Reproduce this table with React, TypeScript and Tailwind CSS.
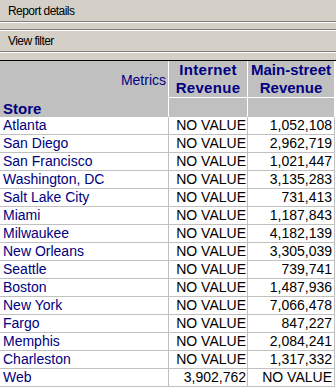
import React from "react";

const rows: [string, string, string][] = [
  ["Atlanta", "NO VALUE", "1,052,108"],
  ["San Diego", "NO VALUE", "2,962,719"],
  ["San Francisco", "NO VALUE", "1,021,447"],
  ["Washington, DC", "NO VALUE", "3,135,283"],
  ["Salt Lake City", "NO VALUE", "731,413"],
  ["Miami", "NO VALUE", "1,187,843"],
  ["Milwaukee", "NO VALUE", "4,182,139"],
  ["New Orleans", "NO VALUE", "3,305,039"],
  ["Seattle", "NO VALUE", "739,741"],
  ["Boston", "NO VALUE", "1,487,936"],
  ["New York", "NO VALUE", "7,066,478"],
  ["Fargo", "NO VALUE", "847,227"],
  ["Memphis", "NO VALUE", "2,084,241"],
  ["Charleston", "NO VALUE", "1,317,332"],
  ["Web", "3,902,762", "NO VALUE"],
];

function Bar({ label, h }: { label: string; h: string }) {
  return (
    <div
      className={`${h} bg-[#d4d0c8] flex items-center pl-[8px] text-[12px] tracking-[-0.55px] text-black`}
    >
      {label}
    </div>
  );
}

export default function App() {
  return (
    <div
      className="w-[336px] h-[389px] bg-white overflow-hidden"
      style={{ fontFamily: '"Liberation Sans", Arial, sans-serif' }}
    >
      <Bar label="Report details" h="h-[21px]" />
      <div className="h-[1px] bg-[#808080]" />
      <div className="h-[1px] bg-white" />
      <div className="h-[6px] bg-[#d4d0c8]" />
      <div className="h-[1px] bg-[#808080]" />
      <div className="h-[1px] bg-white" />
      <Bar label="View filter" h="h-[20px]" />
      <div className="h-[1px] bg-[#808080]" />
      <div className="h-[1px] bg-white" />
      <div className="h-[7px] bg-[#d4d0c8]" />
      <div className="h-[1px] bg-black" />

      <div className="w-[335px]">
        {/* header */}
        <div className="grid grid-cols-[169px_79px_87px] h-[56px] bg-[#c0c0c0] text-[#000080]">
          <div className="border-r border-white flex flex-col">
            <div className="h-[37px] flex items-center justify-end pr-[2px] text-[14px] pt-[1px]">
              Metrics
            </div>
            <div className="flex-1 flex items-center pl-[3px] font-bold text-[15px]">
              Store
            </div>
          </div>
          <div className="border-r border-white flex flex-col">
            <div className="h-[37px] border-b border-white flex flex-col items-center justify-center font-bold text-[15px] leading-[18px] tracking-[0.3px]">
              <span>Internet</span>
              <span>Revenue</span>
            </div>
          </div>
          <div className="border-r border-white flex flex-col">
            <div className="h-[37px] border-b border-white flex flex-col items-center justify-center font-bold text-[15px] leading-[18px]">
              <span>Main-street</span>
              <span>Revenue</span>
            </div>
          </div>
        </div>

        {/* body */}
        {rows.map(([store, a, b]) => (
          <div
            key={store}
            className="grid grid-cols-[169px_79px_87px] h-[18px] text-[14px] leading-[17px]"
          >
            <div className="border-r border-b border-[#c0c0c0] pl-[3px] text-[#000080] whitespace-nowrap">
              {store}
            </div>
            <div className="border-r border-b border-[#c0c0c0] pr-[1px] text-right text-black whitespace-nowrap">
              {a}
            </div>
            <div className="border-r border-b border-[#c0c0c0] pr-[2px] text-right text-black whitespace-nowrap">
              {b}
            </div>
          </div>
        ))}
      </div>
    </div>
  );
}
